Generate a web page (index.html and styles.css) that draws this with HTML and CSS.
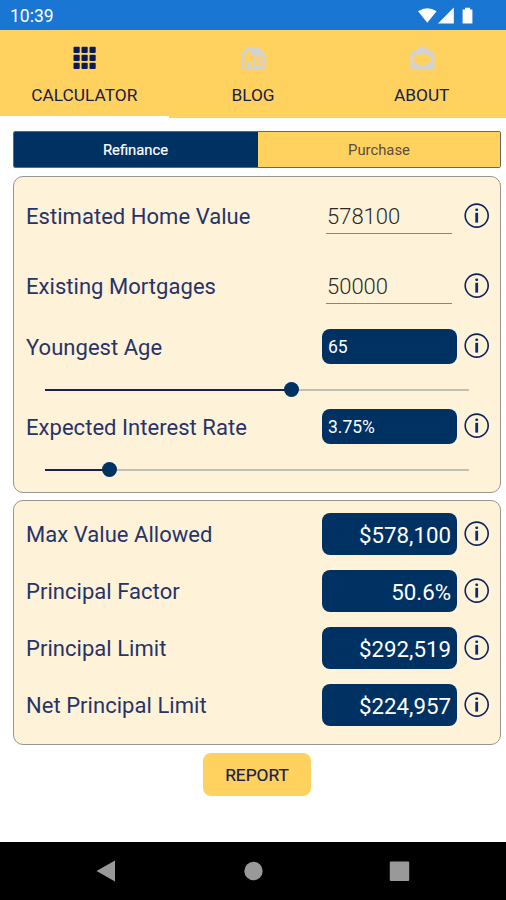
FILE: index.html
```
<!DOCTYPE html>
<html lang="en">
<head>
    <meta charset="UTF-8">
    <meta name="viewport" content="width=device-width, initial-scale=1.0">
    <title>Reverse Mortgage Calculator</title>
    <link rel="stylesheet" href="styles.css">
</head>
<body>

<svg class="defs" width="0" height="0">
    <symbol id="info" viewBox="0 0 26 26">
        <circle cx="12.7" cy="12.6" r="11.5" fill="none" stroke="#0b2260" stroke-width="1.6"/>
        <rect x="11.3" y="5.4" width="2.8" height="2.6" rx="1" fill="#0b2f66"/>
        <rect x="11.3" y="9.8" width="2.8" height="9.8" fill="#0b2f66"/>
    </symbol>
</svg>

<div class="status-bar">
    <span>10:39</span>
    <svg width="56" height="18" viewBox="0 0 56 18" fill="#fff">
        <path d="M0 4.200Q9.300-1.800 18.600 4.200L9.300 15.800Z"/>
        <path d="M35.800 .6V16.400H20Z"/>
        <path d="M44.600 2.500h2.400V.8h5v1.700h2.400v14h-9.800z"/>
    </svg>
</div>

<nav class="tabs">
    <a class="tab active">
        <svg width="28" height="28" viewBox="0 0 28 28" fill="#0b1a55">
            <rect x="3.500" y="2.800" width="6.200" height="6.200" rx="1"/><rect x="11.500" y="2.800" width="6.200" height="6.200" rx="1"/><rect x="19.500" y="2.800" width="6.200" height="6.200" rx="1"/>
            <rect x="3.500" y="10.800" width="6.200" height="6.200" rx="1"/><rect x="11.500" y="10.800" width="6.200" height="6.200" rx="1"/><rect x="19.500" y="10.800" width="6.200" height="6.200" rx="1"/>
            <rect x="3.500" y="18.800" width="6.200" height="6.200" rx="1"/><rect x="11.500" y="18.800" width="6.200" height="6.200" rx="1"/><rect x="19.500" y="18.800" width="6.200" height="6.200" rx="1"/>
        </svg>
        <span>CALCULATOR</span>
    </a>
    <a class="tab">
        <svg width="28" height="28" viewBox="0 0 28 28">
            <path d="M3 11q0-2 2-4l4-4h10l7 7v13q0 2-2 2H5q-2 0-2-2z" fill="#d5d3cf"/>
            <path d="M5.500 12L10 6.500l4.500 5.500v11H12v-6H8.500v6h-3z" fill="#ffd15f"/>
            <path d="M17 12.500h6.500v9H17z" fill="#ffd15f"/>
            <rect x="18.700" y="15" width="3.200" height="3.600" fill="#d5d3cf"/>
        </svg>
        <span>BLOG</span>
    </a>
    <a class="tab">
        <svg width="28" height="28" viewBox="0 0 28 28">
            <path d="M2.500 9L14.500 2l12 7v17h-24z" fill="#d5d3cf"/>
            <path d="M4.500 15l4-5 4 1.500 3-1.500 4 1 4.500 4-4 5-4 1h-5l-4-2z" fill="#ffd15f"/>
        </svg>
        <span>ABOUT</span>
    </a>
</nav>

<main>
    <div class="switch">
        <button type="button" class="selected">Refinance</button>
        <button type="button">Purchase</button>
    </div>

    <section class="card inputs">
        <div class="row field">
            <label for="homeValue">Estimated Home Value</label>
            <input type="text" id="homeValue" value="578100">
            <svg class="info"><use href="#info"/></svg>
        </div>
        <div class="row field">
            <label for="mortgages">Existing Mortgages</label>
            <input type="text" id="mortgages" value="50000">
            <svg class="info"><use href="#info"/></svg>
        </div>
        <div class="row">
            <label>Youngest Age</label>
            <div class="value small">65</div>
            <svg class="info"><use href="#info"/></svg>
        </div>
        <div class="slider">
            <div class="fill" style="width: 58%"></div>
            <div class="thumb"></div>
            <div class="track"></div>
        </div>
        <div class="row">
            <label>Expected Interest Rate</label>
            <div class="value small">3.75%</div>
            <svg class="info"><use href="#info"/></svg>
        </div>
        <div class="slider">
            <div class="fill" style="width: 15%"></div>
            <div class="thumb"></div>
            <div class="track"></div>
        </div>
    </section>

    <section class="card results">
        <div class="row">
            <label>Max Value Allowed</label>
            <div class="value">$578,100</div>
            <svg class="info"><use href="#info"/></svg>
        </div>
        <div class="row">
            <label>Principal Factor</label>
            <div class="value">50.6%</div>
            <svg class="info"><use href="#info"/></svg>
        </div>
        <div class="row">
            <label>Principal Limit</label>
            <div class="value">$292,519</div>
            <svg class="info"><use href="#info"/></svg>
        </div>
        <div class="row">
            <label>Net Principal Limit</label>
            <div class="value">$224,957</div>
            <svg class="info"><use href="#info"/></svg>
        </div>
    </section>

    <button type="button" class="report">REPORT</button>
</main>

<footer class="nav-bar">
    <svg width="506" height="58" viewBox="0 0 506 58" fill="#999">
        <path d="M96.500 29L115 18.500v21z"/>
        <circle cx="253.500" cy="29" r="9.200"/>
        <rect x="389.800" y="19.500" width="19.400" height="19.400" rx="1"/>
    </svg>
</footer>

</body>
</html>
```
FILE: styles.css
```
* {
    box-sizing: border-box;
}
body {
    margin: 0;
    height: 900px;
    display: flex;
    flex-direction: column;
    overflow: hidden;
    background: #fff;
    color: #273468;
    font-family: Roboto, sans-serif;
}
svg {
    display: block;
    flex: none;
}
.defs {
    display: none;
}
button {
    border: 0;
    padding: 0;
    font-family: inherit;
}
.status-bar {
    height: 30px;
    padding: 1px 32px 0 10px;
    display: flex;
    align-items: center;
    justify-content: space-between;
    background: #1976d2;
    color: #fff;
    font-size: 17.5px;
}
.tabs {
    height: 88px;
    display: flex;
    background: #ffd15f;
}
.tab {
    flex: 1;
    padding-top: 14px;
    display: flex;
    flex-direction: column;
    align-items: center;
    gap: 13px;
    font-size: 17.3px;
    line-height: 21px;
    color: #17204a;
}
.tab.active {
    border-bottom: 2px solid #fff;
}
main {
    height: 724px;
    padding: 13px 5px 0 13px;
}
.switch {
    height: 37px;
    display: flex;
    border: 1px solid #6b6660;
    border-radius: 2px;
    overflow: hidden;
}
.switch button {
    flex: 1;
    padding-top: 1px;
    background: #ffd15f;
    color: #5c4c40;
    font-size: 14.8px;
}
.switch .selected {
    flex: 0 0 244px;
    padding-right: 1px;
    background: #003163;
    color: #fff;
    -webkit-text-stroke: 0.2px;
}
.card {
    padding: 0 10px 0 12px;
    border: 1px solid #98948f;
    border-radius: 10px;
    background: #fef2d8;
}
.inputs {
    height: 317px;
    margin-top: 8px;
    padding-top: 4px;
}
.results {
    height: 245px;
    margin-top: 7px;
    padding-top: 4px;
}
.row {
    height: 57px;
    display: flex;
    align-items: center;
}
.row label {
    flex: 1;
    padding-top: 2px;
    font-size: 22px;
    letter-spacing: 0.04px;
}
.field {
    height: 70px;
}
.row.field label {
    padding-top: 0;
}
.field input {
    width: 126px;
    height: 36px;
    margin-right: 12px;
    padding: 2px 0 0 1px;
    border: 0;
    border-bottom: 1px solid #8e8776;
    background: none;
    color: #2b2927;
    font: 350 22px Roboto, sans-serif;
}
.info {
    width: 26px;
    height: 26px;
}
.value {
    width: 135px;
    height: 42px;
    margin-right: 7px;
    padding-right: 6px;
    border-radius: 8px;
    background: #003163;
    color: #fff;
    font-size: 22.3px;
    line-height: 44px;
    text-align: right;
}
.value.small {
    height: 35px;
    padding-left: 6px;
    font-size: 17.5px;
    line-height: 37px;
    text-align: left;
}
.inputs .row:not(.field) {
    height: 50px;
}
.slider {
    height: 30px;
    margin: 0 21px 0 19px;
    padding-top: 7px;
    display: flex;
    align-items: center;
}
.fill {
    height: 2px;
    background: #14225a;
}
.thumb {
    z-index: 1;
    width: 15px;
    height: 15px;
    margin: 0 -7px;
    border-radius: 50%;
    background: #003163;
}
.track {
    flex: 1;
    height: 2px;
    background: #bfbfb5;
}
.report {
    display: block;
    width: 108px;
    height: 43px;
    margin: 8px 0 0 190px;
    border-radius: 8px;
    background: #ffd15f;
    color: #17204a;
    font-size: 17.3px;
    -webkit-text-stroke: 0.2px;
}
.nav-bar {
    height: 58px;
    background: #000;
}
```
